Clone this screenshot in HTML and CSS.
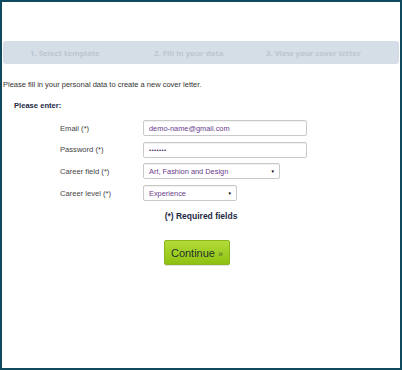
FILE: index.html
```html
<!DOCTYPE html>
<html>
<head>
<meta charset="utf-8">
<link rel="stylesheet" href="styles.css">
</head>
<body>
<div class="frame">
  <div class="steps">
    <span class="step">1. Select template</span>
    <span class="step">2. Fill in your data</span>
    <span class="step">3. View your cover letter</span>
  </div>
  <p class="intro">Please fill in your personal data to create a new cover letter.</p>
  <h2 class="heading">Please enter:</h2>
  <form class="form">
    <label class="label">Email (*)</label>
    <input class="input input-wide" type="text" value="demo-name@gmail.com">
    <label class="label">Password (*)</label>
    <input class="input input-wide pw" type="password" value="1234567">
    <label class="label">Career field (*)</label>
    <div class="select select-field"><span>Art, Fashion and Design</span><span class="arrow">▼</span></div>
    <label class="label">Career level (*)</label>
    <div class="select select-level"><span>Experience</span><span class="arrow">▼</span></div>
  </form>
  <p class="required">(*) Required fields</p>
  <button class="continue" type="button">Continue <span class="raquo">»</span></button>
</div>
</body>
</html>
```
FILE: styles.css
```css
html, body {
  margin: 0;
  padding: 0;
  background: #ffffff;
}
.frame {
  box-sizing: border-box;
  width: 402px;
  height: 370px;
  border: 2px solid #0f4a5e;
  padding: 39px 1px 0 1px;
  font-family: "Liberation Sans", Arial, sans-serif;
  display: flex;
  flex-direction: column;
  align-items: flex-start;
}
.steps {
  align-self: stretch;
  height: 23px;
  background: #d5dde6;
  border-radius: 3px;
  display: grid;
  grid-template-columns: 124px 112px 1fr;
  align-items: center;
  padding-left: 27px;
}
.step {
  font-family: "Open Sans", sans-serif;
  font-weight: 700;
  font-size: 7.8px;
  color: #bcc6d1;
  white-space: nowrap;
}
.intro {
  margin: 16px 0 0 0;
  font-size: 7.5px;
  line-height: 10px;
  color: #333333;
}
.heading {
  margin: 11px 0 0 11px;
  font-size: 7.6px;
  line-height: 10px;
  font-weight: 700;
  color: #1d2a45;
}
.form {
  margin: 9px 0 0 57px;
  display: grid;
  grid-template-columns: 83px auto;
  grid-auto-rows: 16px;
  row-gap: 5.7px;
  align-items: center;
  justify-items: start;
}
.label {
  font-size: 7.6px;
  color: #444444;
}
.input, .select {
  box-sizing: border-box;
  height: 16px;
  border: 1px solid #c9c9c9;
  border-radius: 2px;
  box-shadow: inset 0 1px 1px rgba(0,0,0,0.06);
  background: #ffffff;
  font-family: "Liberation Sans", Arial, sans-serif;
  font-size: 7.4px;
  color: #6a3d8c;
  padding: 0 0 0 5px;
  margin: 0;
  outline: none;
}
.input-wide {
  width: 164px;
}
.pw {
  font-size: 6px;
  letter-spacing: 0.4px;
  color: #4a2a6a;
}
.select {
  display: flex;
  align-items: center;
  justify-content: space-between;
  padding-right: 4px;
}
.select-field {
  width: 137px;
}
.select-level {
  width: 94px;
}
.arrow {
  font-size: 4.5px;
  color: #000000;
}
.required {
  align-self: stretch;
  text-align: center;
  margin: 10px 0 0 0;
  font-size: 8.5px;
  line-height: 11px;
  font-weight: 700;
  color: #1d2a45;
}
.continue {
  margin: 18px 0 0 161px;
  width: 66px;
  height: 25px;
  padding: 0;
  border: 1px solid #8ab51c;
  border-radius: 2px;
  background: linear-gradient(#b3dc38, #8ec112);
  box-shadow: 0 1px 1px rgba(0,0,0,0.12);
  font-family: "Liberation Sans", Arial, sans-serif;
  font-size: 11px;
  color: #27322c;
}
.raquo {
  font-size: 9px;
  color: #4d5e36;
}
```
